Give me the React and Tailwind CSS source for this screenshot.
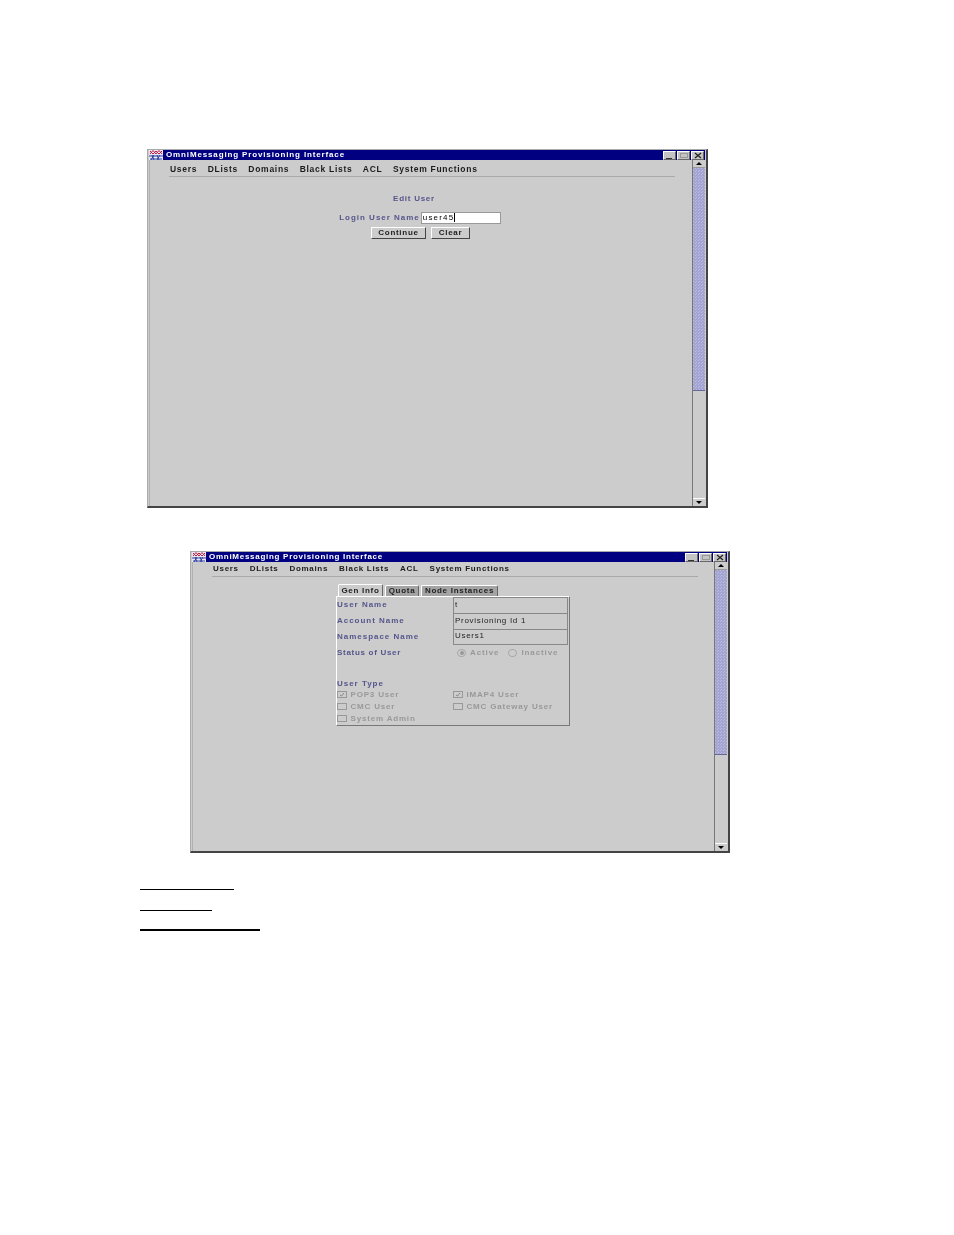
const font = { fontFamily: '"Liberation Sans", Arial, sans-serif' };

function AppIcon() {
  return (
    <svg width="14" height="10" viewBox="0 0 14 10" className="shrink-0">
      <rect width="14" height="10" fill="#e8e8f4" />
      <path d="M1 4 L4 0.5 L7 4 L10 0.5 L13 4 M1 1 L4 4 L7 1 L10 4 L13 1" stroke="#c02040" strokeWidth="1" fill="none" />
      <path d="M0 6 H14 M1 9 H13 M3 5 L5 10 M8 5 L10 10 M11 5 L8 10 M5 5 L2 10" stroke="#3040a0" strokeWidth="1" fill="none" />
    </svg>
  );
}

function WinButton({ kind }) {
  return (
    <div className="w-[13px] h-[9px] bg-[#c4c4c4] border border-t-white border-l-white border-r-[#666666] border-b-[#666666] flex items-center justify-center relative">
      {kind === "min" && <div className="absolute left-[2px] bottom-0 w-[6px] h-[1px] bg-[#333333]" />}
      {kind === "max" && <div className="w-[8px] h-[5px] border border-[#999999]" />}
      {kind === "close" && (
        <svg width="8" height="7" viewBox="0 0 8 7">
          <path d="M1 1 L7 6 M7 1 L1 6" stroke="#222222" strokeWidth="1.3" />
        </svg>
      )}
    </div>
  );
}

function Scrollbar({ thumb }) {
  return (
    <div className="w-[13px] shrink-0 flex flex-col bg-[#cccccc] border-l border-l-[#777777]">
      <div className="h-[8px] shrink-0 flex items-center justify-center border-b border-b-[#999999]">
        <div className="w-0 h-0 border-x-[3px] border-x-transparent border-b-[3px] border-b-black" />
      </div>
      <div
        style={{ height: thumb }}
        className="shrink-0 bg-[#a4a4d2] bg-[linear-gradient(45deg,#bcbce0_25%,transparent_25%,transparent_75%,#bcbce0_75%)] bg-[length:3px_3px] border-b border-b-[#666699]"
      />
      <div className="flex-1" />
      <div className="h-[8px] shrink-0 flex items-center justify-center border-t border-t-white">
        <div className="w-0 h-0 border-x-[3px] border-x-transparent border-t-[3px] border-t-black" />
      </div>
    </div>
  );
}

const menuItems = ["Users", "DLists", "Domains", "Black Lists", "ACL", "System Functions"];

function Window({ className, thumb, titleGap, tracking, children }) {
  return (
    <div className={`bg-[#cccccc] border border-[#aaaaaa] border-r-2 border-b-2 border-r-[#444444] border-b-[#444444] flex flex-col pr-[1px] pl-[1px] ${className}`}>
      <div className="h-[10px] shrink-0 bg-[#000080] flex items-center pl-0 pr-[1px] text-white text-[8px] font-bold">
        <AppIcon />
        <span className="whitespace-nowrap" style={{ marginLeft: titleGap, letterSpacing: tracking }}>OmniMessaging Provisioning Interface</span>
        <div className="ml-auto flex gap-[1px]">
          <WinButton kind="min" />
          <WinButton kind="max" />
          <WinButton kind="close" />
        </div>
      </div>
      <div className="flex-1 flex min-h-0 border-l border-l-[#b0b0b0]">
        <div className="flex-1 min-w-0">{children}</div>
        <Scrollbar thumb={thumb} />
      </div>
    </div>
  );
}

function Label({ children, className = "tracking-[0.98px]" }) {
  return <span className={`text-[8px] font-bold text-[#55558c] ${className}`}>{children}</span>;
}

function Btn({ children, w }) {
  return (
    <div style={{ width: w }} className="h-[12px] bg-[#cccccc] border border-t-white border-l-white border-r-[#444444] border-b-[#444444] flex items-center justify-center text-[8px] font-bold text-[#1c1c1c] tracking-[0.7px]">
      {children}
    </div>
  );
}

function Tab({ children, active, w }) {
  return (
    <div
      style={{ width: w }}
      className={`text-[8px] font-bold text-[#222222] tracking-[0.72px] flex items-center justify-center rounded-t-[2px] border border-b-0 border-t-white border-l-white border-r-[#666666] ${active ? "bg-[#cccccc] h-[12px]" : "bg-[#a4a4a4] h-[11px]"}`}
    >
      {children}
    </div>
  );
}

function ValueRow({ label, value, last }) {
  return (
    <div className="flex h-[16px] items-center">
      <Label className="w-[116px] shrink-0 tracking-[0.98px]">{label}</Label>
      <div className={`w-[115px] h-[16px] border-l border-r border-t border-[#888888] flex items-center pl-[1px] pb-[2px] text-[8px] text-[#222222] tracking-[0.7px] ${last ? "border-b" : ""}`}>
        {value}
      </div>
    </div>
  );
}

function Check({ label, checked, w }) {
  return (
    <div className="flex items-center gap-[3.5px]" style={{ width: w }}>
      <div className="w-[10px] h-[7px] border border-[#999999] bg-[#cccccc] flex items-center justify-center">
        {checked && (
          <svg width="6" height="5" viewBox="0 0 6 5">
            <path d="M1 3 L2.5 4 L5 1" stroke="#888888" fill="none" />
          </svg>
        )}
      </div>
      <span className="text-[8px] font-bold text-[#999999] tracking-[0.82px]">{label}</span>
    </div>
  );
}

function Radio({ label, checked }) {
  return (
    <div className="flex items-center gap-[4px]">
      <div className="w-[9px] h-[8px] rounded-full border border-[#a8a8a8] flex items-center justify-center">
        {checked && <div className="w-[4px] h-[4px] rounded-full bg-[#999999]" />}
      </div>
      <span className="text-[8px] font-bold text-[#999999] tracking-[0.9px]">{label}</span>
    </div>
  );
}

export default function App() {
  return (
    <div style={font} className="w-[954px] h-[1235px] bg-white overflow-hidden pt-[149px] [&_*]:leading-none">
      <Window className="w-[561px] h-[359px] ml-[147px] blur-[0.4px]" thumb="223px" titleGap="3px" tracking="0.86px">
        <div className="pl-[20px] pt-[5px]">
          <div className="flex gap-[10.4px] text-[8.5px] font-bold text-[#1c1c1c] tracking-[0.72px]">
            {menuItems.map((i) => <span key={i}>{i}</span>)}
          </div>
        </div>
        <div className="h-[1px] bg-[#aaaaaa] ml-[19px] mr-[17px] mt-[2px]" />
        <div className="flex flex-col items-center mr-[15px]">
          <Label className="mt-[18px] ml-[1px] tracking-[0.75px]">Edit User</Label>
          <div className="flex items-center mt-[9px] ml-[13px]">
            <Label>Login User Name</Label>
            <div className="w-[80px] h-[12px] ml-[1px] bg-white border border-[#999999] flex items-center pl-[1px] text-[8px] text-black tracking-[1.2px]">
              user45<span className="w-[1px] h-[9px] bg-black" />
            </div>
          </div>
          <div className="flex gap-[5px] mt-[3px] ml-[14px]">
            <Btn w="55px">Continue</Btn>
            <Btn w="39px">Clear</Btn>
          </div>
        </div>
      </Window>

      <Window className="w-[540px] h-[302px] ml-[190px] mt-[43px] blur-[0.4px]" thumb="185px" titleGap="3px" tracking="0.72px">
        <div className="pl-[20px] pt-[3px]">
          <div className="flex gap-[11px] text-[8px] font-bold text-[#1c1c1c] tracking-[0.7px]">
            {menuItems.map((i) => <span key={i}>{i}</span>)}
          </div>
        </div>
        <div className="h-[1px] bg-[#aaaaaa] ml-[19px] mr-[16px] mt-[3px]" />
        <div className="ml-[143px] mt-[8px] w-[234px]">
          <div className="flex items-end gap-[2px] ml-[2px] h-[11px]">
            <Tab active w="45px">Gen Info</Tab>
            <Tab w="34px">Quota</Tab>
            <Tab w="77px">Node Instances</Tab>
          </div>
          <div className="h-[130px] border border-t-white border-l-white border-r-[#777777] border-b-[#777777] flex flex-col">
            <ValueRow label="User Name" value="t" />
            <ValueRow label="Account Name" value="Provisioning Id 1" />
            <ValueRow label="Namespace Name" value="Users1" last />
            <div className="flex items-center h-[16px]">
              <Label className="w-[120px] shrink-0 tracking-[0.7px]">Status of User</Label>
              <div className="flex gap-[9px]">
                <Radio label="Active" checked />
                <Radio label="Inactive" />
              </div>
            </div>
            <Label className="mt-[19px] tracking-[0.98px]">User Type</Label>
            <div className="flex flex-col gap-[3px] mt-[2px]">
              <div className="flex h-[9px]">
                <Check label="POP3 User" checked w="116px" />
                <Check label="IMAP4 User" checked />
              </div>
              <div className="flex h-[9px]">
                <Check label="CMC User" w="116px" />
                <Check label="CMC Gateway User" />
              </div>
              <div className="flex h-[9px]">
                <Check label="System Admin" />
              </div>
            </div>
          </div>
        </div>
      </Window>

      <div className="ml-[140px] mt-[36px] flex flex-col">
        <div className="w-[94px] h-[1px] bg-black" />
        <div className="w-[72px] h-[1px] bg-black mt-[20px]" />
        <div className="w-[120px] h-[2px] bg-black mt-[18px]" />
      </div>
    </div>
  );
}
